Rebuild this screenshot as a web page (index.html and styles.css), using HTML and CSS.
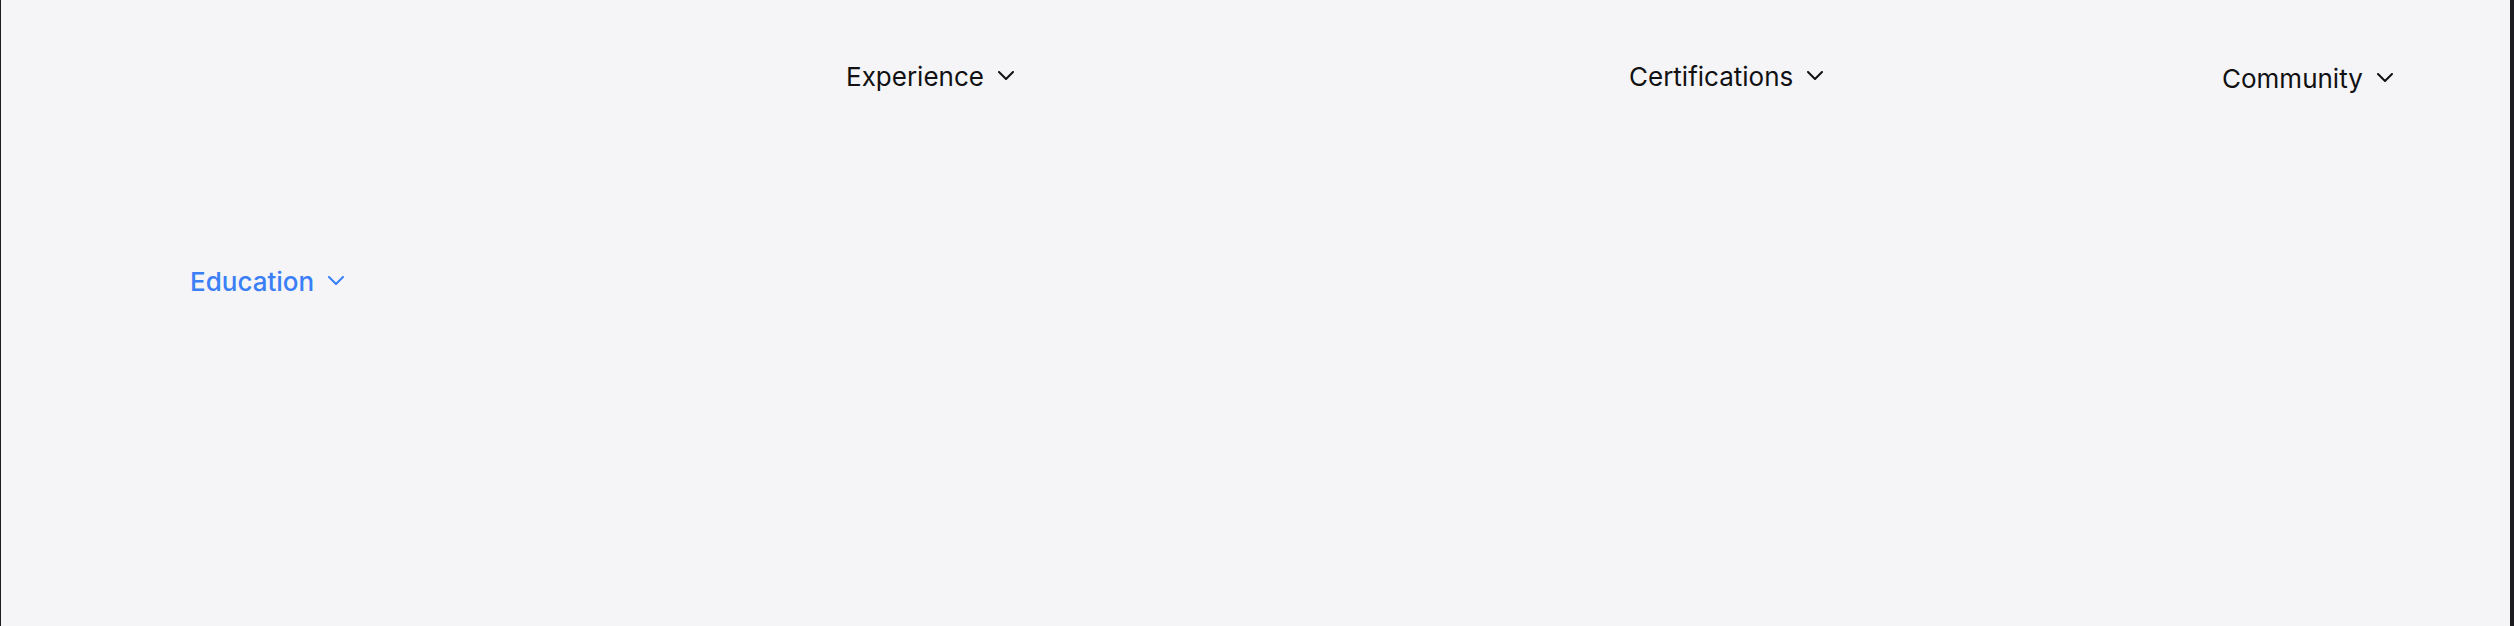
FILE: index.html
```html
<!DOCTYPE html>
<html lang="en">
<head>
<meta charset="utf-8">
<title>Navigation</title>
<link rel="stylesheet" href="styles.css">
</head>
<body>
<div class="page">
  <nav class="row row-top">
    <button class="nav-item">
      <span>Experience</span>
      <svg class="chev" viewBox="0 0 16 9" width="16" height="9"><polyline points="1,1 8,8 15,1"/></svg>
    </button>
    <button class="nav-item">
      <span>Certifications</span>
      <svg class="chev" viewBox="0 0 16 9" width="16" height="9"><polyline points="1,1 8,8 15,1"/></svg>
    </button>
    <button class="nav-item nav-item-low">
      <span>Community</span>
      <svg class="chev" viewBox="0 0 16 9" width="16" height="9"><polyline points="1,1 8,8 15,1"/></svg>
    </button>
  </nav>
  <nav class="row row-bottom">
    <button class="nav-item nav-item-active">
      <span>Education</span>
      <svg class="chev" viewBox="0 0 16 9" width="16" height="9"><polyline points="1,1 8,8 15,1"/></svg>
    </button>
  </nav>
</div>
</body>
</html>
```
FILE: styles.css
```css
html, body {
  margin: 0;
  padding: 0;
}
body {
  background: #f5f5f7;
  font-family: Inter, "Noto Sans", "Liberation Sans", sans-serif;
}
.page {
  box-sizing: border-box;
  width: 2514px;
  height: 626px;
  border-left: 1px solid #1b1b20;
  border-right: 4px solid #1b1b20;
  background: #f5f5f7;
  overflow: hidden;
}
.row {
  display: grid;
  align-items: start;
}
.row-top {
  padding-top: 61px;
  padding-left: 845px;
  grid-template-columns: 783px 593px auto;
}
.row-bottom {
  padding-top: 171px;
  padding-left: 189px;
  grid-template-columns: auto;
  justify-content: start;
}
.nav-item {
  display: flex;
  align-items: center;
  gap: 14px;
  padding: 0;
  margin: 0;
  border: 0;
  background: none;
  font-family: inherit;
  font-size: 26px;
  line-height: 32px;
  font-weight: 400;
  color: #111113;
  cursor: pointer;
  justify-self: start;
}
.nav-item-low {
  margin-top: 2px;
}
.nav-item-active {
  color: #3a7ff6;
  font-weight: 500;
}
.chev {
  margin-top: -3px;
  fill: none;
  stroke: currentColor;
  stroke-width: 2;
  stroke-linecap: round;
  stroke-linejoin: round;
}
```
